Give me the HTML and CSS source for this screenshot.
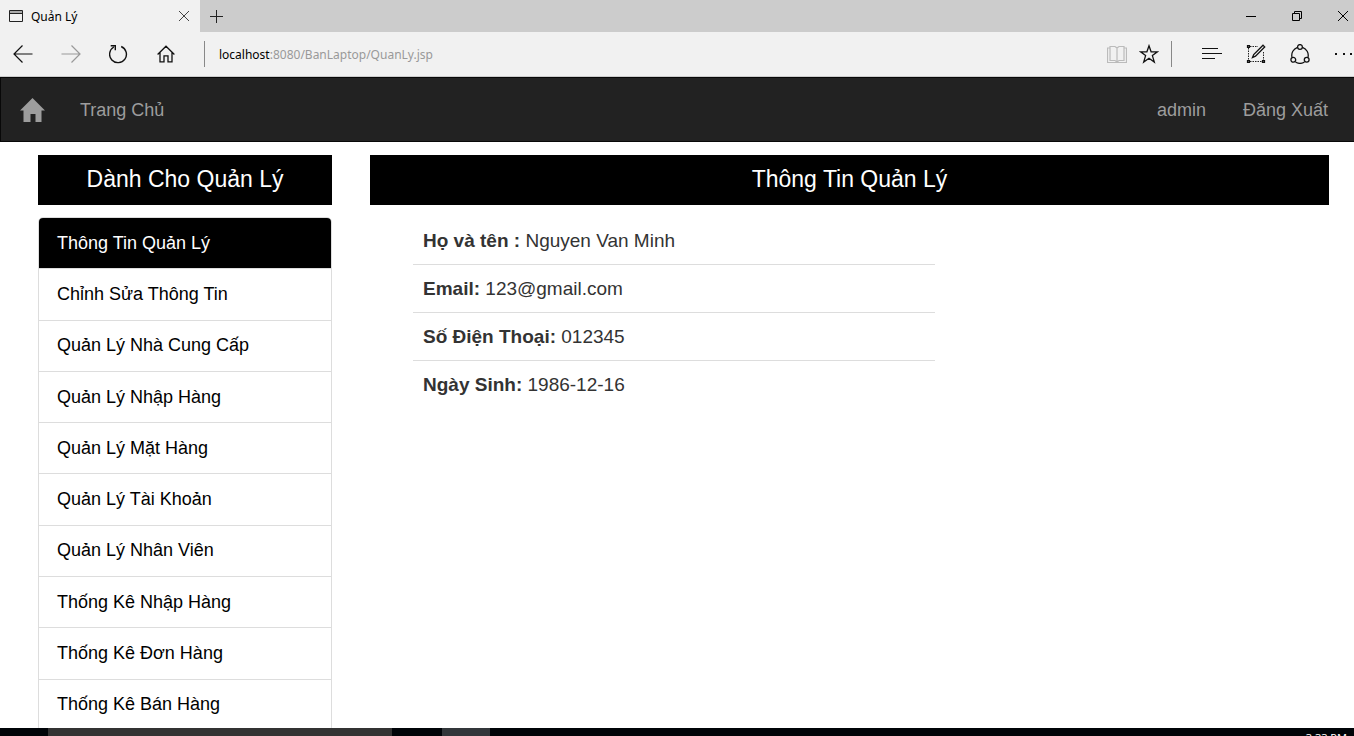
FILE: index.html
```html
<!DOCTYPE html>
<html lang="vi">
<head>
<meta charset="utf-8">
<title>Quản Lý</title>
<link rel="stylesheet" href="styles.css">
</head>
<body>
<div class="titlebar">
  <div class="tab">
    <svg class="tab-icon" width="14" height="12" viewBox="0 0 14 12"><path d="M1 1h12v2H1z" fill="#aaa"/><path d="M.5.5h13v11H.5zM.5 3.500h13" fill="none" stroke="#222"/></svg>
    <span class="tab-title">Quản Lý</span>
    <button class="icon-btn" aria-label="Close tab"><svg width="12" height="12" viewBox="0 0 12 12"><path d="M1 1l10 10M11 1L1 11" stroke="#444" fill="none"/></svg></button>
  </div>
  <button class="icon-btn new-tab" aria-label="New tab"><svg width="13" height="13" viewBox="0 0 13 13"><path d="M6.500 0v13M0 6.500h13" stroke="#222"/></svg></button>
  <div class="window-buttons">
    <button class="icon-btn" aria-label="Minimize"><svg width="10" height="10" viewBox="0 0 10 10"><path d="M0 5.500h10" stroke="#000"/></svg></button>
    <button class="icon-btn" aria-label="Restore"><svg width="10" height="10" viewBox="0 0 10 10"><path d="M.5 2.500h7v7h-7zM2.500 2.500v-2h7v7h-2" fill="none" stroke="#000"/></svg></button>
    <button class="icon-btn" aria-label="Close"><svg width="10" height="10" viewBox="0 0 10 10"><path d="M0 0l10 10M10 0L0 10" stroke="#000"/></svg></button>
  </div>
</div>
<div class="toolbar">
  <div class="nav-buttons">
    <button class="icon-btn" aria-label="Back"><svg width="20" height="18" viewBox="0 0 20 18"><path d="M19.500 9H1M9.500.5L1 9l8.500 8.500" fill="none" stroke="#111" stroke-width="1.200"/></svg></button>
    <button class="icon-btn" aria-label="Forward"><svg width="20" height="18" viewBox="0 0 20 18"><path d="M.5 9H19M10.500.5L19 9l-8.500 8.500" fill="none" stroke="#999" stroke-width="1.200"/></svg></button>
    <button class="icon-btn" aria-label="Refresh"><svg width="20" height="20" viewBox="0 0 20 20"><path d="M12.200 2.500A8.400 8.400 0 1 1 4.800 3M1.700 1.700h4.600v4.600" fill="none" stroke="#111" stroke-width="1.400"/></svg></button>
    <button class="icon-btn" aria-label="Home"><svg width="18" height="18" viewBox="0 0 18 18"><path d="M.6 9.500L9 1.200l8.400 8.300M3 7.500v9.300h4v-6h4v6h4V7.500" fill="none" stroke="#111" stroke-width="1.300"/></svg></button>
  </div>
  <span class="divider"></span>
  <div class="address" role="textbox" aria-label="Address" contenteditable="true" spellcheck="false">localhost<span class="path">:8080/BanLaptop/QuanLy.jsp</span></div>
  <div class="page-buttons">
    <button class="icon-btn" aria-label="Reading view"><svg width="20" height="19" viewBox="0 0 20 19"><path d="M3 1.500h5l2 1.500 2-1.500h5v14h-5L10 17l-2-1.500H3zM10 3v14M3 3H.5v14.500h19V3H17" fill="none" stroke="#bbb" stroke-width="1.200"/></svg></button>
    <button class="icon-btn" aria-label="Favorite"><svg width="20" height="20" viewBox="0 0 20 20"><path d="M10 1.800l2.100 6h6.300l-5 3.800 1.900 6.400L10 14.200 4.700 18l1.900-6.400-5-3.800h6.300z" fill="none" stroke="#111" stroke-width="1.300"/></svg></button>
  </div>
  <span class="divider"></span>
  <div class="tools">
    <button class="icon-btn" aria-label="Hub"><svg width="20" height="12" viewBox="0 0 20 12"><path d="M0 .5h16M0 5.500h20M0 10.500h13" stroke="#111" stroke-width="1.200"/></svg></button>
    <button class="icon-btn" aria-label="Web note"><svg width="20" height="20" viewBox="0 0 20 20"><path d="M4 2.500h8M2.500 4v13M4 17.500h13M17.500 8v9" fill="none" stroke="#222" stroke-dasharray="1.500 1"/><path d="M1.500 1.500h2v2h-2zM1.500 16.500h2v2h-2zM16.500 16.500h2v2h-2z" fill="#666" stroke="#111" stroke-width="1.200"/><path d="M6.500 13.500l1.200-3L17 1.200l1.700 1.700-9.200 9.300z" fill="#eee" stroke="#111" stroke-width="1.300"/></svg></button>
    <button class="icon-btn" aria-label="Share"><svg width="20" height="20" viewBox="0 0 20 20"><path d="M12.500 3.300a8.500 8.500 0 0 1 5.500 10M14.500 18a8.500 8.500 0 0 1-9 0M2 13.300a8.500 8.500 0 0 1 5.500-10" fill="none" stroke="#111" stroke-width="1.300"/><g fill="#f1f1f1" stroke="#111" stroke-width="1.300"><circle cx="10" cy="3" r="2.400"/><circle cx="3.300" cy="15.800" r="2.400"/><circle cx="16.700" cy="15.800" r="2.400"/></g></svg></button>
    <button class="icon-btn" aria-label="More"><svg width="20" height="4" viewBox="0 0 20 4"><path d="M1 1h2v2H1zM9 1h2v2H9zM16 1h2v2h-2z" fill="#111"/></svg></button>
  </div>
</div>
<nav class="navbar">
  <a class="home-link" href="#" aria-label="Home"><svg width="26" height="24" viewBox="0 0 26 24"><path d="M12.500 0L25 12.500h-3.500V24h-6v-8h-5v8h-7V12.500H0z" fill="#9d9d9d"/></svg></a>
  <a href="#">Trang Chủ</a>
  <div class="account"><a href="#">admin</a><a href="#">Đăng Xuất</a></div>
</nav>
<div class="content">
  <aside class="sidebar">
    <h2 class="heading">Dành Cho Quản Lý</h2>
    <div class="list">
      <a class="item active" href="#">Thông Tin Quản Lý</a>
      <a class="item" href="#">Chỉnh Sửa Thông Tin</a>
      <a class="item" href="#">Quản Lý Nhà Cung Cấp</a>
      <a class="item" href="#">Quản Lý Nhập Hàng</a>
      <a class="item" href="#">Quản Lý Mặt Hàng</a>
      <a class="item" href="#">Quản Lý Tài Khoản</a>
      <a class="item" href="#">Quản Lý Nhân Viên</a>
      <a class="item" href="#">Thống Kê Nhập Hàng</a>
      <a class="item" href="#">Thống Kê Đơn Hàng</a>
      <a class="item" href="#">Thống Kê Bán Hàng</a>
    </div>
  </aside>
  <main class="main">
    <h2 class="heading">Thông Tin Quản Lý</h2>
    <table class="info">
      <tr><td><b>Họ và tên :</b> Nguyen Van Minh</td></tr>
      <tr><td><b>Email:</b> 123@gmail.com</td></tr>
      <tr><td><b>Số Điện Thoại:</b> 012345</td></tr>
      <tr><td><b>Ngày Sinh:</b> 1986-12-16</td></tr>
    </table>
  </main>
</div>
<footer class="taskbar">
  <div class="task-search"></div>
  <div class="task-app"></div>
  <div class="clock">3:33 PM</div>
</footer>
</body>
</html>
```
FILE: styles.css
```css
* { box-sizing: border-box; }
body {
  margin: 0;
  height: 100vh;
  display: flex;
  flex-direction: column;
  overflow: hidden;
  background: #fff;
  color: #333;
  font-family: "Liberation Sans", Arial, sans-serif;
  font-size: 18px;
}
a { text-decoration: none; color: inherit; }
svg { display: block; }
.icon-btn {
  border: 0;
  padding: 0;
  background: none;
  flex: none;
}
.titlebar {
  flex: none;
  display: flex;
  align-items: center;
  height: 32px;
  background: #ccc;
  font-family: "Noto Sans", sans-serif;
  font-size: 12px;
  color: #000;
}
.tab {
  width: 200px;
  height: 32px;
  padding: 0 10px 0 9px;
  display: flex;
  align-items: center;
  gap: 8px;
  background: #f1f1f1;
}
.tab-title { flex: 1; }
.new-tab { margin-left: 10px; }
.window-buttons {
  margin-left: auto;
  padding-right: 6px;
  display: flex;
  gap: 36px;
}
.toolbar {
  flex: none;
  display: flex;
  align-items: center;
  height: 45px;
  padding-left: 13px;
  background: #f1f1f1;
  border-bottom: 1px solid #ccc;
}
.nav-buttons {
  display: flex;
  align-items: center;
  gap: 28px;
  margin-right: 29px;
}
.divider { width: 1px; height: 26px; background: #888; }
.address {
  flex: 1;
  margin-left: 14px;
  font-family: "Noto Sans", sans-serif;
  font-size: 12px;
  color: #000;
}
.path { color: #999; }
.page-buttons {
  display: flex;
  align-items: center;
  gap: 12px;
  margin-right: 12px;
}
.tools {
  display: flex;
  align-items: center;
  gap: 24px;
  margin-left: 30px;
}
.navbar {
  flex: none;
  display: flex;
  align-items: center;
  height: 65px;
  padding: 1px 26px 0 19px;
  background: #222;
  border: 1px solid #080808;
  border-right: 0;
  color: #9d9d9d;
}
.home-link { margin-right: 34px; }
.account { margin-left: auto; display: flex; gap: 37px; }
.content {
  flex: 1;
  min-height: 0;
  overflow: hidden;
  display: grid;
  grid-template-columns: 294fr 959fr;
  align-items: start;
  gap: 38px;
  padding: 13px 25px 0 38px;
}
.heading {
  margin: 0;
  padding: 9px 0 11px;
  background: #000;
  color: #fff;
  font-size: 23px;
  line-height: 30px;
  font-weight: 400;
  text-align: center;
}
.list {
  display: grid;
  grid-auto-rows: 1fr;
  min-height: 515px;
  margin-top: 12px;
  border: 1px solid #ddd;
  border-radius: 5px;
  overflow: hidden;
}
.item {
  display: flex;
  align-items: center;
  padding: 0 18px;
  border-bottom: 1px solid #ddd;
  color: #000;
}
.item.active { background: #000; color: #fff; }
.info {
  width: 522px;
  max-width: 100%;
  margin: 12px 0 0 43px;
  border-collapse: collapse;
  font-size: 19px;
  line-height: 27px;
}
.info td { padding: 10px; }
.info tr + tr td { border-top: 1px solid #ddd; }
.taskbar {
  flex: none;
  height: 8px;
  overflow: hidden;
  display: flex;
  padding: 0 7px 0 48px;
  background: #000408;
  color: #fff;
}
.task-search { width: 344px; background: #333; }
.task-app { width: 48px; margin-left: 50px; background: #32363a; }
.clock {
  margin-left: auto;
  padding-top: 3px;
  font-family: "Noto Sans", sans-serif;
  font-size: 11px;
  line-height: 14px;
}
```
